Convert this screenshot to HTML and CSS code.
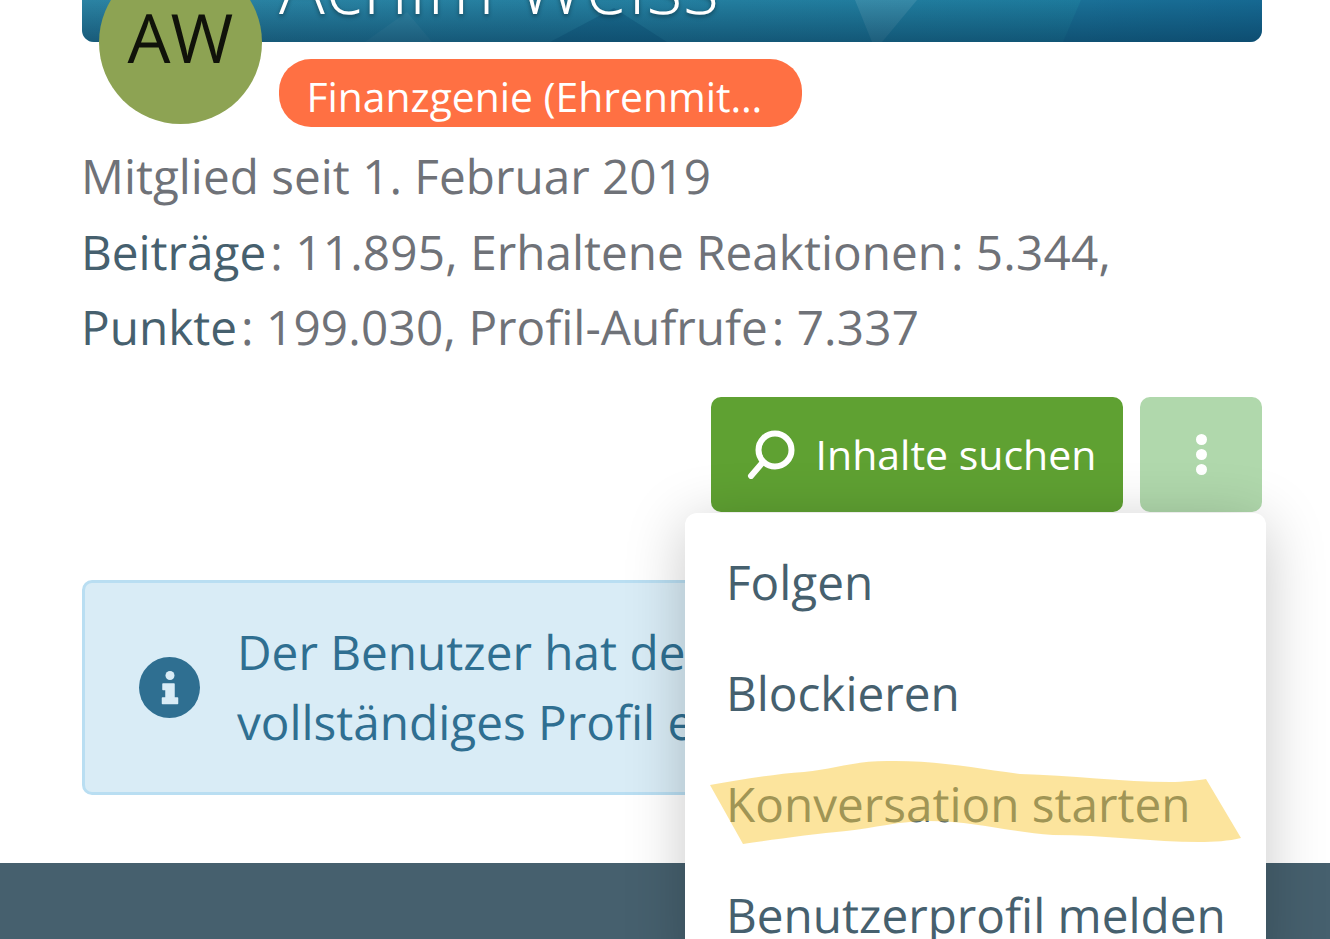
FILE: index.html
```html
<!DOCTYPE html>
<html lang="de">
<head>
<meta charset="utf-8">
<title>Achim Weiss</title>
<link rel="stylesheet" href="styles.css">
</head>
<body>
<main class="page">
  <header class="banner">
    <svg class="banner-art" viewBox="0 0 1180 42" preserveAspectRatio="none" aria-hidden="true">
      <polygon points="773,0 835,0 800,42 790,42" fill="#ffffff" fill-opacity="0.1"/>
      <polygon points="283,42 325,12 350,42" fill="#ffffff" fill-opacity="0.05"/>
      <polygon points="468,42 532,8 585,42" fill="#0a4f78" fill-opacity="0.35"/>
      <polygon points="999,0 1180,0 1180,42 981,42" fill="#155a8a" fill-opacity="0.3"/>
    </svg>
    <h1 class="banner-name">Achim Weiss</h1>
  </header>
  <div class="avatar">AW</div>
  <div class="badge-row"><span class="badge">Finanzgenie (Ehrenmit…</span></div>
  <div class="stats">
    <p>Mitglied seit 1. Februar 2019</p>
    <p><a class="stat-link stat-label">Beiträge</a>: <span class="stat-value">11.895,</span> <span class="stat-label">Erhaltene Reaktionen</span>: <span class="stat-value">5.344,</span></p>
    <p><a class="stat-link stat-label">Punkte</a>: <span class="stat-value">199.030,</span> <span class="stat-label">Profil-Aufrufe</span>: <span class="stat-value">7.337</span></p>
  </div>
  <div class="actions">
    <button class="btn btn-search">
      <svg class="search-icon" viewBox="0 0 50 50" aria-hidden="true">
        <circle cx="29" cy="21" r="16.500" fill="none" stroke="#fff" stroke-width="6"/>
        <path d="M17 33 5 47" fill="none" stroke="#fff" stroke-width="6" stroke-linecap="round"/>
      </svg>
      Inhalte suchen
    </button>
    <button class="btn btn-more" aria-label="Mehr">
      <span class="dot"></span><span class="dot"></span><span class="dot"></span>
    </button>
  </div>
  <section class="notice">
    <svg class="notice-icon" viewBox="0 0 61 61" aria-hidden="true">
      <circle cx="30.500" cy="30.500" r="30.500" fill="#2f6f91"/>
      <circle cx="31" cy="18.500" r="4.500" fill="#d9ecf6"/>
      <path d="M24 27h11v14h3.500v5.500H23.500V41H27v-8.500h-3z" fill="#d9ecf6" stroke="#d9ecf6" stroke-width="1.500" stroke-linejoin="round"/>
    </svg>
    <p class="notice-text">Der Benutzer hat de<br>vollständiges Profil e</p>
  </section>
</main>
<footer class="footer"></footer>
<nav class="menu">
  <a class="menu-item">Folgen</a>
  <a class="menu-item">Blockieren</a>
  <a class="menu-item">Konversation starten</a>
  <a class="menu-item">Benutzerprofil melden</a>
</nav>
<svg class="marker" viewBox="0 0 532 84" aria-hidden="true">
  <path d="M1 25 C30 20 65 14 95 12 C125 9 145 1 178 1 C225 0 265 8 311 14 C360 15 415 22 461 22 C475 22 490 20 497 19 L532 78 C520 81 505 82 490 82 C445 82 395 75 344 75 C300 72 265 61 220 61 C190 61 165 68 137 71 C105 74 60 80 34 84 Z" fill="#f9c93c" fill-opacity="0.5"/>
</svg>
</body>
</html>
```

FILE: styles.css
```css
html, body {
  margin: 0;
  height: 939px;
  overflow: hidden;
  background: #fff;
}

body {
  position: relative;
  display: flex;
  flex-direction: column;
  font-family: "Open Sans", "Noto Sans", sans-serif;
  font-size: 47.700px;
  color: #6f7278;
  text-rendering: geometricPrecision;
}

.page {
  position: relative;
  height: 863px;
  box-sizing: border-box;
  padding: 0 68px 0 82px;
}

.banner {
  position: relative;
  height: 42px;
  overflow: hidden;
  border-radius: 0 0 12px 12px;
  background: linear-gradient(100deg, #2b83a3 0%, #237e9f 55%, #1d7a9c 85%, #176f95 100%);
  display: flex;
  align-items: flex-end;
  padding-left: 197px;
}

.banner::after {
  content: "";
  position: absolute;
  inset: 0;
  background: linear-gradient(180deg, rgba(5, 50, 80, 0) 0%, rgba(5, 50, 80, 0.5) 100%);
}

.banner-art {
  position: absolute;
  inset: 0;
  width: 100%;
  height: 100%;
}

.banner-name {
  position: relative;
  z-index: 1;
  margin: 0 0 32px;
  font-size: 76.300px;
  font-weight: 300;
  line-height: 50px;
  letter-spacing: 1px;
  color: #fff;
  white-space: nowrap;
  text-shadow: 0 2px 4px rgba(0, 0, 0, 0.4);
}

.avatar {
  position: absolute;
  left: 99px;
  top: -39px;
  width: 163px;
  height: 163px;
  border-radius: 50%;
  background: #8da353;
  color: #10120a;
  font-size: 68px;
  line-height: 152px;
  text-align: center;
}

.badge-row {
  padding: 17px 0 0 197px;
  display: flex;
}

.badge {
  width: 523px;
  height: 68px;
  box-sizing: border-box;
  padding-left: 27.500px;
  border-radius: 32px;
  background: #ff7043;
  color: #fff;
  font-size: 40.800px;
  line-height: 74px;
  white-space: nowrap;
}

.stats {
  margin: 11px 0 0 -1px;
}

.stats p {
  margin: 0;
  height: 75.500px;
  line-height: 75.500px;
  white-space: nowrap;
}

.stat-link {
  color: #46606e;
}

.stat-label {
  margin-right: 4px;
}

.stat-value {
  letter-spacing: 0.200px;
}

.actions {
  display: flex;
  justify-content: flex-end;
  gap: 17px;
  margin-top: 32px;
}

.btn {
  height: 115px;
  border: 0;
  border-radius: 10px;
  font: inherit;
  color: #fff;
  display: flex;
  align-items: center;
  justify-content: center;
}

.btn-search {
  width: 412px;
  gap: 20px;
  padding: 0 0 0 8px;
  font-size: 41px;
  background: #5fa132;
}

.search-icon {
  width: 50px;
  height: 50px;
}

.btn-more {
  width: 122px;
  flex-direction: column;
  gap: 4px;
  background: #b0d8ac;
}

.dot {
  width: 11px;
  height: 11px;
  border-radius: 50%;
  background: #fff;
}

.notice {
  margin-top: 68px;
  height: 215px;
  box-sizing: border-box;
  display: flex;
  align-items: center;
  gap: 37px;
  padding-left: 54px;
  border: 3px solid #b9def2;
  border-radius: 10px;
  background: #d9ecf6;
  color: #2f6f91;
}

.notice-icon {
  width: 61px;
  height: 61px;
  flex: none;
}

.notice-text {
  margin: 0;
  line-height: 70px;
  white-space: nowrap;
}

.footer {
  flex: 1;
  background: #46606e;
}

.menu {
  position: absolute;
  left: 685px;
  top: 513px;
  width: 581px;
  height: 460px;
  box-sizing: border-box;
  padding-top: 13px;
  border-radius: 12px;
  background: #fff;
  box-shadow: 0 10px 60px rgba(0, 0, 0, 0.22);
  z-index: 2;
}

.menu-item {
  display: block;
  height: 111px;
  padding-left: 41px;
  line-height: 111px;
  color: #46606e;
  white-space: nowrap;
}

.marker {
  position: absolute;
  left: 709px;
  top: 760px;
  width: 532px;
  height: 84px;
  z-index: 3;
}
```
